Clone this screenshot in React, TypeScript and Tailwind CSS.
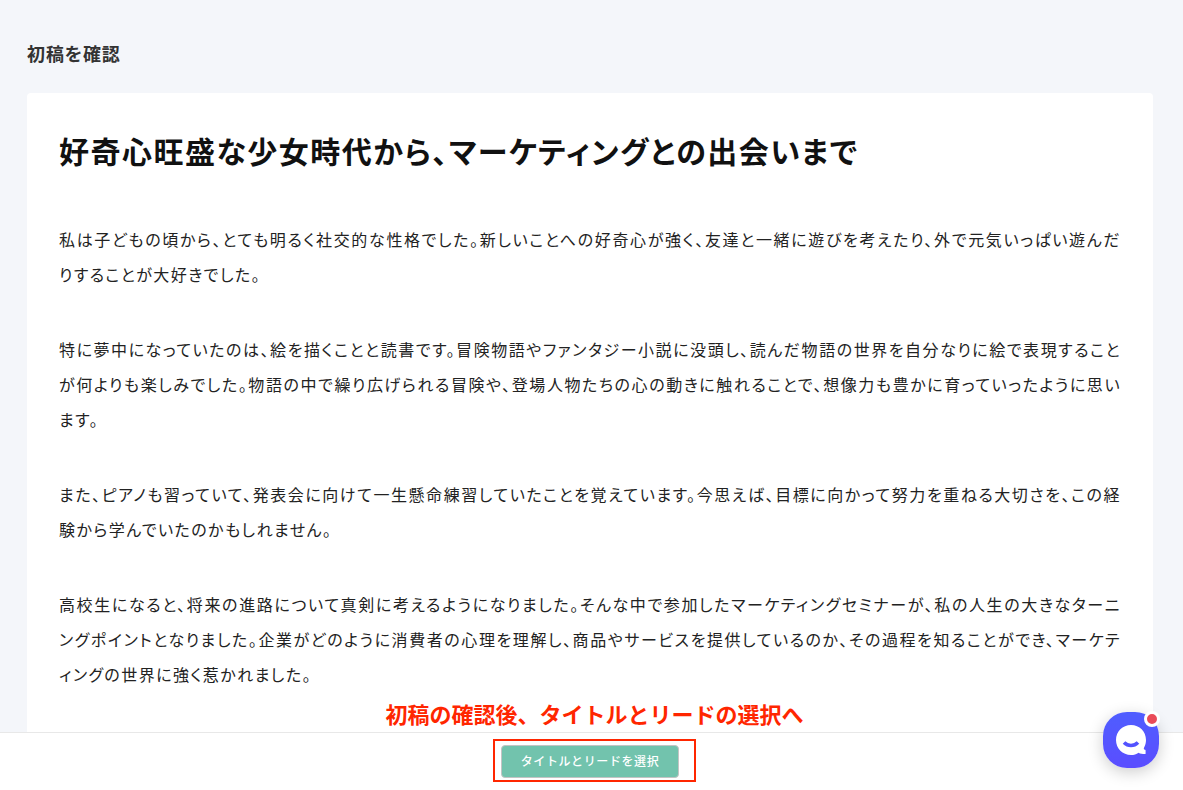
const PARAGRAPHS = [
  '私は子どもの頃から、とても明るく社交的な性格でした。新しいことへの好奇心が強く、友達と一緒に遊びを考えたり、外で元気いっぱい遊んだりすることが大好きでした。',
  '特に夢中になっていたのは、絵を描くことと読書です。冒険物語やファンタジー小説に没頭し、読んだ物語の世界を自分なりに絵で表現することが何よりも楽しみでした。物語の中で繰り広げられる冒険や、登場人物たちの心の動きに触れることで、想像力も豊かに育っていったように思います。',
  'また、ピアノも習っていて、発表会に向けて一生懸命練習していたことを覚えています。今思えば、目標に向かって努力を重ねる大切さを、この経験から学んでいたのかもしれません。',
  '高校生になると、将来の進路について真剣に考えるようになりました。そんな中で参加したマーケティングセミナーが、私の人生の大きなターニングポイントとなりました。企業がどのように消費者の心理を理解し、商品やサービスを提供しているのか、その過程を知ることができ、マーケティングの世界に強く惹かれました。',
]

export default function App() {
  return (
    <div
      lang="ja"
      className="flex min-h-screen flex-col bg-[#f4f6fa] font-['Noto_Sans_CJK_JP',sans-serif] text-[#111111]"
    >
      <main className="flex flex-1 flex-col pl-[27px] pr-[30px] pt-[39px]">
        <h1 className="mb-[26px] text-lg font-bold tracking-wider text-[#333333] [font-feature-settings:'palt']">
          初稿を確認
        </h1>
        <Draft />
      </main>
      <ActionBar />
      <ChatButton />
    </div>
  )
}

function Draft() {
  return (
    <article className="flex-1 rounded-t bg-white px-8 pb-8 pt-[33px] [font-feature-settings:'palt']">
      <h2 className="mb-12 text-3xl/12 font-bold tracking-wider">
        好奇心旺盛な少女時代から、マーケティングとの出会いまで
      </h2>
      <div className="flex flex-col gap-10 text-justify text-base/[35px] tracking-[0.09em] text-[#222222]">
        {PARAGRAPHS.map((text) => (
          <p key={text}>{text}</p>
        ))}
      </div>
    </article>
  )
}

function ActionBar() {
  return (
    <footer className="sticky bottom-0 flex justify-center border-t border-[#e8e8e8] bg-white pb-2 pl-1.5 pt-1.5">
      <p className="absolute bottom-full whitespace-nowrap text-[22px]/10 font-bold text-[#ff2600]">
        初稿の確認後、タイトルとリードの選択へ
      </p>
      <div className="border-2 border-[#ff2600] pb-0.5 pl-1.5 pr-[15px] pt-1">
        <button
          type="button"
          className="block h-[33px] w-[178px] rounded border border-[#c4c4c4] bg-[#72c3ad] pb-0.5 text-xs font-medium tracking-wider text-white"
        >
          タイトルとリードを選択
        </button>
      </div>
    </footer>
  )
}

function ChatButton() {
  return (
    <button
      type="button"
      aria-label="チャットを開く"
      className="fixed bottom-[22px] right-6 size-14 rounded-3xl bg-gradient-to-b from-[#4f5dff] to-[#5a4dff] shadow-[0_4px_16px_rgba(0,0,0,0.2)]"
    >
      <svg viewBox="0 0 56 56" className="size-14" fill="none">
        <path
          d="M28 13c8.600 0 15 6.600 15 15 0 2.800-.7 5.300-1.900 7.500-.6 1.200-.3 2 .9 2.200.4.100.6.4.6.8v3c0 .4-.2.600-.6.600-2.600 0-4.500-.4-6.500-1.400C33.400 42.200 30.900 43 28 43c-8.400 0-15-6.600-15-15s6.600-15 15-15z"
          fill="#ffffff"
        />
        <path d="M21 30.500c4 4 10 4 14 0" stroke="#5353ff" strokeWidth="3.600" strokeLinecap="butt" />
      </svg>
      <span className="absolute -right-px -top-px size-4 rounded-full border-[3px] border-white bg-[#e94b58]" />
    </button>
  )
}
